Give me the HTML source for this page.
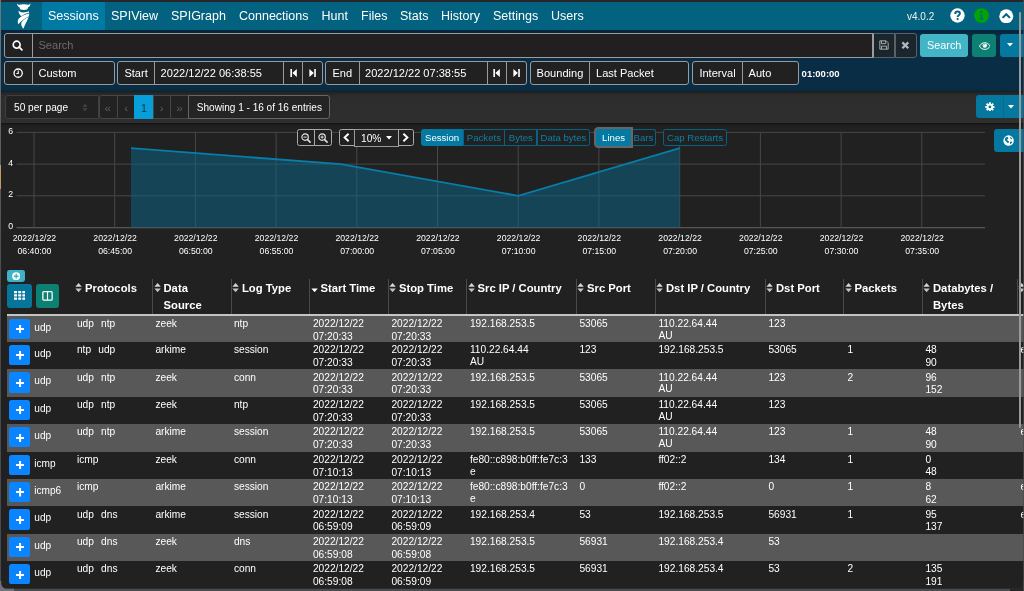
<!DOCTYPE html><html><head><meta charset="utf-8"><title>Arkime Sessions</title><style>*{box-sizing:border-box;margin:0;padding:0}
html,body{width:1024px;height:591px;overflow:hidden;background:#212121;font-family:"Liberation Sans",sans-serif;color:#fff}
body{position:relative}
.abs{position:absolute}
#topbar{position:absolute;left:0;top:0;width:1024px;height:2px;background:#26262b}
#nav{position:absolute;left:0;top:2px;width:1024px;height:27.6px;background:#03627f}
#nav .active{position:absolute;left:42px;top:0;width:63px;height:27.6px;background:#0079a3}
#nav span.i{position:absolute;top:7.3px;font-size:12.5px;line-height:15px;color:#fff;white-space:nowrap}
#navy{position:absolute;left:0;top:29.6px;width:1024px;height:61.6px;background:linear-gradient(#05253a 0,#082b41 4px,#092d44 6px,#092d44 100%)}
.box{position:absolute;background:#212121;border:0.8px solid #979a9e;height:23.6px}
.t{position:absolute;font-size:11.05px;line-height:13px;color:#fff;white-space:nowrap}
#pagebar{position:absolute;left:0;top:91.2px;width:1024px;height:31.5px;background:linear-gradient(#1a1d20 0,#272727 2.5px,#2d2d2d 5px,#2e2e2e 100%);box-shadow:0 1px 2.5px rgba(0,0,0,.55)}
.pbox{position:absolute;top:95.2px;height:24px;background:#222;border:0.8px solid #464646}
.row{position:absolute;left:7px;width:1017px}
.row.odd{background:#585858}
.row.even{background:#212121}
.plus{position:absolute;left:1.9px;top:3.1px;width:21.2px;height:20.2px;background:#0a84ff;border-radius:2.6px;display:flex;align-items:center;justify-content:center}
.proto0{position:absolute;left:27.3px;top:6px;font-size:10.1px;line-height:12px;color:#fff}
.c{position:absolute;top:2.3px;font-size:10.2px;line-height:12.75px;color:#fff;white-space:nowrap;margin-left:-7px}
.h{position:absolute;font-size:11.25px;line-height:16.8px;font-weight:bold;color:#fff;white-space:nowrap;top:279.9px}
.sep{position:absolute;top:279px;width:1px;height:35.5px;background:#4a4a4a}
.lbl{position:absolute;font-size:8.7px;line-height:13.2px;color:#fff;text-align:center;width:80px;white-space:nowrap}
.ylb{position:absolute;left:5px;width:8px;text-align:right;font-size:8.7px;line-height:10px;color:#fff}
.cb{position:absolute;top:129.2px;height:16.8px;font-size:9.6px;line-height:15.2px;white-space:nowrap;text-align:center}

.g{margin-left:7.2px}
#wrap{position:absolute;left:0;top:0;width:1024px;height:591px;will-change:transform}
.l2{position:relative}
</style></head><body><div id="wrap">
<div id="topbar"></div>
<div id="nav">
 <div class="active"></div>
 <svg class="abs" style="left:12px;top:-2px" width="28" height="32" viewBox="12 0 28 32">
  <path fill="#fff" d="M17.1 3.2C17.8 4.5 18.8 5 20 4.8C21.6 4 26 4 27.5 4.8C28.7 5 29.7 4.5 30.4 3.2C30.5 5.2 29.6 6.6 28.2 7.2C28 8.4 27.4 9.4 26.4 9.9C25.6 10.2 24.8 10 24 9.7C23.2 10 22.2 10.2 21.2 9.9C20.2 9.4 19.6 8.4 19.4 7.2C18 6.6 17 5.2 17.1 3.2Z"/>
  <path fill="#03627f" fill-opacity=".45" d="M20.6 8.9C21.4 8.5 22.4 8.8 23 9.5C22.2 10 21.2 9.8 20.6 8.9ZM27.2 8.9C26.4 8.5 25.4 8.8 24.8 9.5C25.6 10 26.6 9.8 27.2 8.9Z"/>
  <path fill="#fff" d="M18.5 10.6C19.5 12 21.5 12.6 23.5 12.5C25.5 12.4 27.5 12 28.9 11.3C29.1 11.8 29.1 12.3 29 12.8C26.5 13.4 23.5 14.6 21.2 16.2C19.6 15 18.5 13 18.5 10.6Z"/>
  <path fill="#fff" d="M29.2 13.4C29.3 14.6 29.1 15.6 28.7 16.4C25 18 21 21 18.3 24.2C17.4 22.4 17.6 20.2 18.8 18.6C21.4 15.8 25.4 14.2 29.2 13.4Z"/>
  <path fill="#fff" d="M28.6 17C27.6 21 24.8 24 23.5 28.8C21.4 26.6 20.7 24.2 21.6 22.2C23 20 26 18 28.6 17Z"/>
 </svg>
 <span class="i" style="left:48px">Sessions</span>
 <span class="i" style="left:111px">SPIView</span>
 <span class="i" style="left:171px">SPIGraph</span>
 <span class="i" style="left:239px">Connections</span>
 <span class="i" style="left:321.5px">Hunt</span>
 <span class="i" style="left:361px">Files</span>
 <span class="i" style="left:400px">Stats</span>
 <span class="i" style="left:441px">History</span>
 <span class="i" style="left:493px">Settings</span>
 <span class="i" style="left:551px">Users</span>
 <span class="abs" style="left:907px;top:8.9px;font-size:10px;line-height:12px;color:#f0f0f0">v4.0.2</span>
 <svg class="abs" style="left:949.8px;top:5.9px" width="15" height="15" viewBox="0 0 15 15"><circle cx="7.5" cy="7.5" r="7.2" fill="#fff"/><path d="M5.2 5.9C5.2 4.4 6.2 3.5 7.6 3.5C9 3.5 9.9 4.4 9.9 5.5C9.9 7.1 7.6 7.2 7.6 8.9" fill="none" stroke="#03627f" stroke-width="1.9"/><circle cx="7.6" cy="11.1" r="1.15" fill="#03627f"/></svg>
 <svg class="abs" style="left:974.4px;top:6.4px" width="15" height="15" viewBox="0 0 15 15"><circle cx="7.5" cy="7.5" r="7.3" fill="#00a600"/><circle cx="7.4" cy="3.9" r="1.25" fill="#03627f"/><path d="M5.8 6.3H8.5V10.4H9.4V11.8H5.7V10.4H6.5V7.6H5.8Z" fill="#03627f"/></svg>
 <svg class="abs" style="left:999px;top:6.8px" width="14.5" height="14.5" viewBox="0 0 15 15"><circle cx="7.5" cy="7.5" r="7.2" fill="#fff"/><path d="M3.7 9.2L7.5 5.4L11.3 9.2" fill="none" stroke="#03627f" stroke-width="2.1"/></svg>
</div>
<div id="navy"></div>

<!-- search row -->
<div class="box" style="left:4px;top:33px;height:25px;width:28.6px;border-radius:3px 0 0 3px"></div>
<svg class="abs" style="left:12px;top:40px" width="11.2" height="11.2" viewBox="0 0 12 12"><circle cx="5" cy="5" r="3.7" fill="none" stroke="#fff" stroke-width="1.8"/><path d="M7.5 7.5L10.6 10.6" stroke="#fff" stroke-width="1.9" stroke-linecap="round"/></svg>
<div class="box" style="left:31.8px;top:33px;height:25px;width:841.6px;background:#211f20;border-color:#9c9c9c"></div>
<span class="t" style="left:38.5px;top:39.2px;color:#6c6c6c">Search</span>
<div class="box" style="left:872.6px;top:33px;height:25px;width:22.8px;background:#1b252c;border-color:#5b6169;border-left-color:#9c9c9c"></div>
<svg class="abs" style="left:878.8px;top:40.4px" width="10" height="10" viewBox="0 0 12 12"><path d="M1 1H8.6L11 3.4V11H1Z M3 1V4.4H8V1 M3 11V7.4H9V11" fill="none" stroke="#aaa" stroke-width="1.2"/></svg>
<div class="box" style="left:894.6px;top:33px;height:25px;width:22.2px;border-radius:0 3px 3px 0;background:#1b252c;border-color:#5b6169"></div>
<svg class="abs" style="left:901.4px;top:41.4px" width="8.6" height="8.6" viewBox="0 0 9 9"><path d="M1.4 1.4L7.6 7.6M7.6 1.4L1.4 7.6" stroke="#b4b8bc" stroke-width="2.4"/></svg>
<div class="abs" style="left:920px;top:33.6px;width:48.4px;height:23.6px;border-radius:3px;background:#42b6c7"></div>
<span class="t" style="left:926.9px;top:39.2px;font-size:10.9px">Search</span>
<div class="abs" style="left:972.4px;top:33.6px;width:24px;height:23.6px;border-radius:3px;background:#0e8073"></div>
<svg class="abs" style="left:978.6px;top:41.6px" width="11.6" height="8" viewBox="0 0 12 8"><path d="M0.4 4.2C2 1.6 4 0.6 6 0.6C8 0.6 10 1.6 11.6 4.2C10 6.6 8 7.5 6 7.5C4 7.5 2 6.6 0.4 4.2Z" fill="none" stroke="#fff" stroke-width="1"/><circle cx="6" cy="3.6" r="2.3" fill="#fff"/><path d="M4.6 3.4C4.7 2.7 5.2 2.3 5.9 2.2" stroke="#0e8073" stroke-width=".7" fill="none"/></svg>
<div class="abs" style="left:1000px;top:33.6px;width:24px;height:23.6px;border-radius:3px 0 0 3px;background:#04789f"></div>
<svg class="abs" style="left:1006.6px;top:43.2px" width="6" height="4" viewBox="0 0 6 4"><path d="M0 0H6L3 3.6Z" fill="#fff"/></svg>

<!-- time row -->
<div class="box" style="left:4px;top:61.2px;width:28.6px;border-radius:3px 0 0 3px"></div>
<svg class="abs" style="left:13.3px;top:68.2px" width="10.3" height="10.3" viewBox="0 0 11 11"><circle cx="5.5" cy="5.5" r="4.4" fill="none" stroke="#fff" stroke-width="1.4"/><path d="M5.6 2.8V5.9H3.6" fill="none" stroke="#fff" stroke-width="1.2"/></svg>
<div class="box" style="left:31.8px;top:61.2px;width:83.2px;border-radius:0 3px 3px 0"></div>
<span class="t" style="left:38.5px;top:66.6px">Custom</span>

<div class="box" style="left:117.2px;top:61.2px;width:37.8px;border-radius:3px 0 0 3px"></div>
<span class="t" style="left:124.4px;top:66.6px">Start</span>
<div class="box" style="left:154.2px;top:61.2px;width:130px"></div>
<span class="t" style="left:160.6px;top:66.6px">2022/12/22 06:38:55</span>
<div class="box" style="left:283.4px;top:61.2px;width:19.6px"></div>
<div class="box" style="left:302.2px;top:61.2px;width:20.6px;border-radius:0 3px 3px 0"></div>
<svg class="abs" style="left:289.6px;top:68.2px" width="7.2" height="10" viewBox="0 0 8 10"><path d="M0.4 0.6H2.2V9.4H0.4Z M7.6 0.6V9.4L2.6 5Z" fill="#fff"/></svg>
<svg class="abs" style="left:308.9px;top:68.2px" width="7.2" height="10" viewBox="0 0 8 10"><path d="M7.6 0.6H5.8V9.4H7.6Z M0.4 0.6V9.4L5.4 5Z" fill="#fff"/></svg>

<div class="box" style="left:325.3px;top:61.2px;width:34.3px;border-radius:3px 0 0 3px"></div>
<span class="t" style="left:332.4px;top:66.6px">End</span>
<div class="box" style="left:358.8px;top:61.2px;width:129px"></div>
<span class="t" style="left:365px;top:66.6px">2022/12/22 07:38:55</span>
<div class="box" style="left:487px;top:61.2px;width:20px"></div>
<div class="box" style="left:506.2px;top:61.2px;width:20.6px;border-radius:0 3px 3px 0"></div>
<svg class="abs" style="left:493.4px;top:68.2px" width="7.2" height="10" viewBox="0 0 8 10"><path d="M0.4 0.6H2.2V9.4H0.4Z M7.6 0.6V9.4L2.6 5Z" fill="#fff"/></svg>
<svg class="abs" style="left:513.1px;top:68.2px" width="7.2" height="10" viewBox="0 0 8 10"><path d="M7.6 0.6H5.8V9.4H7.6Z M0.4 0.6V9.4L5.4 5Z" fill="#fff"/></svg>

<div class="box" style="left:530.4px;top:61.2px;width:59.8px;border-radius:3px 0 0 3px"></div>
<span class="t" style="left:536.6px;top:66.6px">Bounding</span>
<div class="box" style="left:589.4px;top:61.2px;width:100px;border-radius:0 3px 3px 0"></div>
<span class="t" style="left:596px;top:66.6px">Last Packet</span>

<div class="box" style="left:692.2px;top:61.2px;width:50.8px;border-radius:3px 0 0 3px"></div>
<span class="t" style="left:699.4px;top:66.6px">Interval</span>
<div class="box" style="left:742.2px;top:61.2px;width:56.6px;border-radius:0 3px 3px 0"></div>
<span class="t" style="left:748.6px;top:66.6px">Auto</span>
<span class="t" style="left:801.6px;top:67px;font-size:9.5px;font-weight:bold">01:00:00</span>

<!-- pagination bar -->
<div id="pagebar"></div>
<div class="pbox" style="left:4.6px;width:94px;border-radius:3px 0 0 3px;border-color:#3e3e3e"></div>
<span class="t" style="left:14px;top:101.2px;font-size:10.15px">50 per page</span>
<svg class="abs" style="left:82.4px;top:103.2px" width="6" height="9" viewBox="0 0 7 10"><path d="M3.5 0.5L6.5 4H0.5Z M3.5 9.5L6.5 6H0.5Z" fill="#41444a"/></svg>
<div class="pbox" style="left:98.6px;width:19.4px;border-radius:3px 0 0 3px"></div>
<div class="pbox" style="left:117.2px;width:18px"></div>
<div class="pbox" style="left:134.4px;width:19px;background:#069fd9;border-color:#069fd9"></div>
<div class="pbox" style="left:152.6px;width:18px"></div>
<div class="pbox" style="left:169.8px;width:19px"></div>
<span class="t" style="left:104.6px;top:100.8px;color:#5c5c5c;font-size:11.6px">«</span>
<span class="t" style="left:124.2px;top:100.8px;color:#5c5c5c;font-size:11.6px">‹</span>
<span class="t" style="left:141px;top:101.6px;color:#17303d;font-size:10.6px">1</span>
<span class="t" style="left:159.8px;top:100.8px;color:#5c5c5c;font-size:11.6px">›</span>
<span class="t" style="left:176.2px;top:100.8px;color:#5c5c5c;font-size:11.6px">»</span>
<div class="pbox" style="left:188px;width:142.4px;border-radius:0 3px 3px 0;border-color:#666;background:#242424"></div>
<span class="t" style="left:196.8px;top:101.2px;font-size:10.05px">Showing 1 - 16 of 16 entries</span>
<div class="abs" style="left:976.4px;top:94.9px;width:47.6px;height:23.6px;border-radius:3px 0 0 3px;background:#04789f"></div>
<div class="abs" style="left:1003px;top:94.9px;width:1px;height:23.6px;background:#066b8d"></div>
<svg class="abs" style="left:984.9px;top:101.6px" width="9.8" height="9.8" viewBox="0 0 11 11"><g fill="#fff"><circle cx="5.5" cy="5.5" r="3.6"/><g><rect x="4.4" y="0.3" width="2.2" height="10.4" rx="0.4"/><rect x="4.4" y="0.3" width="2.2" height="10.4" rx="0.4" transform="rotate(45 5.5 5.5)"/><rect x="4.4" y="0.3" width="2.2" height="10.4" rx="0.4" transform="rotate(90 5.5 5.5)"/><rect x="4.4" y="0.3" width="2.2" height="10.4" rx="0.4" transform="rotate(135 5.5 5.5)"/></g></g><circle cx="5.5" cy="5.5" r="1.6" fill="#04789f"/></svg>
<svg class="abs" style="left:1008.4px;top:104.6px" width="6" height="4" viewBox="0 0 6 4"><path d="M0 0H6L3 3.6Z" fill="#fff"/></svg>

<svg class="abs" style="left:0;top:125px" width="1024" height="140" viewBox="0 125 1024 140">
<rect x="16.5" y="131.9" width="968.5" height="1" fill="#484848"/>
<rect x="16.5" y="163.6" width="968.5" height="1" fill="#484848"/>
<rect x="16.5" y="195.3" width="968.5" height="1" fill="#484848"/>
<rect x="16.5" y="227.0" width="968.5" height="1.3" fill="#555"/>
<rect x="33.5" y="132.4" width="1" height="95.1" fill="#484848"/>
<rect x="114.2" y="132.4" width="1" height="95.1" fill="#484848"/>
<rect x="194.9" y="132.4" width="1" height="95.1" fill="#484848"/>
<rect x="275.6" y="132.4" width="1" height="95.1" fill="#484848"/>
<rect x="356.3" y="132.4" width="1" height="95.1" fill="#484848"/>
<rect x="437.0" y="132.4" width="1" height="95.1" fill="#484848"/>
<rect x="517.7" y="132.4" width="1" height="95.1" fill="#484848"/>
<rect x="598.4" y="132.4" width="1" height="95.1" fill="#484848"/>
<rect x="679.2" y="132.4" width="1" height="95.1" fill="#484848"/>
<rect x="759.9" y="132.4" width="1" height="95.1" fill="#484848"/>
<rect x="840.6" y="132.4" width="1" height="95.1" fill="#484848"/>
<rect x="921.3" y="132.4" width="1" height="95.1" fill="#484848"/>
<polygon points="131.0,227.5 131.0,148.2 340.7,164.1 518.2,195.8 679.7,148.2 679.7,227.5" fill="#07688c" fill-opacity="0.5"/>
<polyline points="131.0,148.2 340.7,164.1 518.2,195.8 679.7,148.2" fill="none" stroke="#087da7" stroke-width="1.8"/>
</svg>
<div class="ylb" style="top:125.9px">6</div>
<div class="ylb" style="top:157.6px">4</div>
<div class="ylb" style="top:189.3px">2</div>
<div class="ylb" style="top:221.0px">0</div>
<div class="lbl" style="left:-5.6px;top:231.8px">2022/12/22<br>06:40:00</div>
<div class="lbl" style="left:75.1px;top:231.8px">2022/12/22<br>06:45:00</div>
<div class="lbl" style="left:155.8px;top:231.8px">2022/12/22<br>06:50:00</div>
<div class="lbl" style="left:236.5px;top:231.8px">2022/12/22<br>06:55:00</div>
<div class="lbl" style="left:317.2px;top:231.8px">2022/12/22<br>07:00:00</div>
<div class="lbl" style="left:397.9px;top:231.8px">2022/12/22<br>07:05:00</div>
<div class="lbl" style="left:478.6px;top:231.8px">2022/12/22<br>07:10:00</div>
<div class="lbl" style="left:559.3px;top:231.8px">2022/12/22<br>07:15:00</div>
<div class="lbl" style="left:640.1px;top:231.8px">2022/12/22<br>07:20:00</div>
<div class="lbl" style="left:720.8px;top:231.8px">2022/12/22<br>07:25:00</div>
<div class="lbl" style="left:801.5px;top:231.8px">2022/12/22<br>07:30:00</div>
<div class="lbl" style="left:882.2px;top:231.8px">2022/12/22<br>07:35:00</div>
<!-- chart controls -->
<div class="cb" style="left:297.4px;width:17.6px;border:0.8px solid #aaa;border-radius:2.4px 0 0 2.4px;background:#212121"></div>
<div class="cb" style="left:314.2px;width:17.8px;border:0.8px solid #aaa;border-radius:0 2.4px 2.4px 0;background:#212121"></div>
<svg class="abs" style="left:301px;top:133.2px" width="10" height="10" viewBox="0 0 10 10"><circle cx="4.1" cy="4.1" r="3.2" fill="none" stroke="#e6e6e6" stroke-width="1.15"/><path d="M6.6 6.6L9.1 9.1" stroke="#e6e6e6" stroke-width="1.5" stroke-linecap="round"/><path d="M2.5 4.1H5.7" stroke="#e6e6e6" stroke-width="0.95"/></svg>
<svg class="abs" style="left:318.2px;top:133.2px" width="10" height="10" viewBox="0 0 10 10"><circle cx="4.1" cy="4.1" r="3.2" fill="none" stroke="#e6e6e6" stroke-width="1.15"/><path d="M6.6 6.6L9.1 9.1" stroke="#e6e6e6" stroke-width="1.5" stroke-linecap="round"/><path d="M2.5 4.1H5.7M4.1 2.5V5.7" stroke="#e6e6e6" stroke-width="0.95"/></svg>
<div class="cb" style="left:338.8px;width:16.2px;border:0.8px solid #aaa;border-radius:2.4px 0 0 2.4px;background:#212121"></div>
<div class="cb" style="left:354.2px;width:44.6px;border:0.8px solid #999;background:#232323;top:129px;height:17.8px"></div>
<div class="cb" style="left:398px;width:15.6px;border:0.8px solid #aaa;border-radius:0 2.4px 2.4px 0;background:#212121"></div>
<svg class="abs" style="left:343.4px;top:133.4px" width="7" height="9" viewBox="0 0 7 9"><path d="M5.6 0.8L1.6 4.5L5.6 8.2" fill="none" stroke="#fff" stroke-width="1.9"/></svg>
<svg class="abs" style="left:402.4px;top:133.4px" width="7" height="9" viewBox="0 0 7 9"><path d="M1.4 0.8L5.4 4.5L1.4 8.2" fill="none" stroke="#fff" stroke-width="1.9"/></svg>
<span class="t" style="left:361px;top:131.6px;font-size:10.2px">10%</span>
<svg class="abs" style="left:386px;top:136.4px" width="6" height="4" viewBox="0 0 6 4"><path d="M0 0H6L3 3.4Z" fill="#fff"/></svg>

<div class="cb" style="left:420.8px;width:42.6px;background:#0479a1;border:0.8px solid #0479a1;border-radius:2.4px 0 0 2.4px;color:#fff">Session</div>
<div class="cb" style="left:462.8px;width:42.2px;border:0.8px solid #066384;color:#0a80aa;background:#212121">Packets</div>
<div class="cb" style="left:504.2px;width:33.2px;border:0.8px solid #066384;color:#0a80aa;background:#212121">Bytes</div>
<div class="cb" style="left:536.6px;width:53.6px;border:0.8px solid #066384;color:#0a80aa;background:#212121;border-radius:0 2.4px 2.4px 0">Data bytes</div>
<div class="cb" style="left:596.4px;width:34.4px;background:#0479a1;border:0.8px solid #0479a1;border-radius:2.4px 0 0 2.4px;color:#fff;box-shadow:0 0 0 2px #666;z-index:3">Lines</div>
<div class="cb" style="left:631.4px;width:25px;border:0.8px solid #066384;border-left:none;color:#0a80aa;background:#212121;border-radius:0 2.4px 2.4px 0">Bars</div>
<div class="cb" style="left:663px;width:64.2px;border:0.8px solid #066384;color:#0a80aa;background:#212121;border-radius:2.4px">Cap Restarts</div>

<div class="abs" style="left:994.4px;top:129px;width:29.6px;height:22.8px;background:#04789f;border-radius:3px 0 0 3px"></div>
<svg class="abs" style="left:1003px;top:134.6px" width="11.2" height="11.2" viewBox="0 0 12 12"><circle cx="6" cy="6" r="5.6" fill="#fff"/><path d="M2.2 3.4C3.2 2.2 4.4 2 5.4 2.6C6.2 3.2 5.6 4.2 4.8 4.6C4.2 5.2 4.6 6 5.4 6.2C6.4 6.6 6.6 7.6 6 8.4C5.4 9 4.4 8.6 4 7.8C3.6 6.8 2.6 6.6 2.2 5.6Z M7.4 2.2C8.6 2.4 9.6 3.2 10 4.4C9.2 4.8 8.2 4.4 7.8 3.6Z M8 7C8.8 6.6 9.8 7 10 7.6C9.6 8.6 8.8 9.4 7.8 9.8C7.4 8.8 7.4 7.6 8 7Z" fill="#04789f"/></svg>

<div class="abs" style="left:7.2px;top:270px;width:17.4px;height:12px;border-radius:2.4px;background:#3fb2c5"></div>
<svg class="abs" style="left:11.7px;top:271.8px" width="8.4" height="8.4" viewBox="0 0 10 10"><circle cx="5" cy="5" r="4.8" fill="#fff"/><path d="M5 2.2V7.8M2.2 5H7.8" stroke="#3fb2c5" stroke-width="1.7"/></svg>
<div class="abs" style="left:7.2px;top:284.2px;width:24.6px;height:24.2px;border-radius:3px;background:#07759a"></div>
<svg class="abs" style="left:14px;top:291.2px" width="11.4" height="8.8" viewBox="0 0 12 11" preserveAspectRatio="none"><g fill="#fff"><rect x="0" y="0" width="3.2" height="2.8" rx=".4"/><rect x="4.4" y="0" width="3.2" height="2.8" rx=".4"/><rect x="8.8" y="0" width="3.2" height="2.8" rx=".4"/><rect x="0" y="4.1" width="3.2" height="2.8" rx=".4"/><rect x="4.4" y="4.1" width="3.2" height="2.8" rx=".4"/><rect x="8.8" y="4.1" width="3.2" height="2.8" rx=".4"/><rect x="0" y="8.2" width="3.2" height="2.8" rx=".4"/><rect x="4.4" y="8.2" width="3.2" height="2.8" rx=".4"/><rect x="8.8" y="8.2" width="3.2" height="2.8" rx=".4"/></g></svg>
<div class="abs" style="left:35.8px;top:284.2px;width:23.4px;height:24.2px;border-radius:3px;background:#0c8072"></div>
<svg class="abs" style="left:42px;top:291.2px" width="11" height="9.8" viewBox="0 0 12 11"><rect x="0.8" y="0.8" width="10.4" height="9.4" rx="1" fill="none" stroke="#fff" stroke-width="1.4"/><path d="M6 1V10" stroke="#fff" stroke-width="1.3"/></svg>
<svg class="abs" style="left:75.0px;top:282.9px" width="7.2" height="9.2" viewBox="0 0 7 10"><path d="M3.5 0L7 4.1H0Z" fill="#d6d6d6"/><path d="M3.5 10L7 5.9H0Z" fill="#c4c4c4"/></svg>
<div class="h" style="left:85.0px">Protocols</div>
<div class="sep" style="left:152.0px"></div>
<svg class="abs" style="left:153.5px;top:282.9px" width="7.2" height="9.2" viewBox="0 0 7 10"><path d="M3.5 0L7 4.1H0Z" fill="#d6d6d6"/><path d="M3.5 10L7 5.9H0Z" fill="#c4c4c4"/></svg>
<div class="h" style="left:163.5px">Data<br>Source</div>
<div class="sep" style="left:230.5px"></div>
<svg class="abs" style="left:232.0px;top:282.9px" width="7.2" height="9.2" viewBox="0 0 7 10"><path d="M3.5 0L7 4.1H0Z" fill="#d6d6d6"/><path d="M3.5 10L7 5.9H0Z" fill="#c4c4c4"/></svg>
<div class="h" style="left:242.0px">Log Type</div>
<div class="sep" style="left:309.0px"></div>
<svg class="abs" style="left:310.5px;top:282.9px" width="7.2" height="9.2" viewBox="0 0 7 10"><path d="M3.5 10L7 5.9H0Z" fill="#fff"/></svg>
<div class="h" style="left:320.5px">Start Time</div>
<div class="sep" style="left:387.5px"></div>
<svg class="abs" style="left:389.0px;top:282.9px" width="7.2" height="9.2" viewBox="0 0 7 10"><path d="M3.5 0L7 4.1H0Z" fill="#d6d6d6"/><path d="M3.5 10L7 5.9H0Z" fill="#c4c4c4"/></svg>
<div class="h" style="left:399.0px">Stop Time</div>
<div class="sep" style="left:466.0px"></div>
<svg class="abs" style="left:467.5px;top:282.9px" width="7.2" height="9.2" viewBox="0 0 7 10"><path d="M3.5 0L7 4.1H0Z" fill="#d6d6d6"/><path d="M3.5 10L7 5.9H0Z" fill="#c4c4c4"/></svg>
<div class="h" style="left:477.5px">Src IP / Country</div>
<div class="sep" style="left:575.5px"></div>
<svg class="abs" style="left:577.0px;top:282.9px" width="7.2" height="9.2" viewBox="0 0 7 10"><path d="M3.5 0L7 4.1H0Z" fill="#d6d6d6"/><path d="M3.5 10L7 5.9H0Z" fill="#c4c4c4"/></svg>
<div class="h" style="left:587.0px">Src Port</div>
<div class="sep" style="left:654.5px"></div>
<svg class="abs" style="left:656.0px;top:282.9px" width="7.2" height="9.2" viewBox="0 0 7 10"><path d="M3.5 0L7 4.1H0Z" fill="#d6d6d6"/><path d="M3.5 10L7 5.9H0Z" fill="#c4c4c4"/></svg>
<div class="h" style="left:666.0px">Dst IP / Country</div>
<div class="sep" style="left:764.5px"></div>
<svg class="abs" style="left:766.0px;top:282.9px" width="7.2" height="9.2" viewBox="0 0 7 10"><path d="M3.5 0L7 4.1H0Z" fill="#d6d6d6"/><path d="M3.5 10L7 5.9H0Z" fill="#c4c4c4"/></svg>
<div class="h" style="left:776.0px">Dst Port</div>
<div class="sep" style="left:843.0px"></div>
<svg class="abs" style="left:844.5px;top:282.9px" width="7.2" height="9.2" viewBox="0 0 7 10"><path d="M3.5 0L7 4.1H0Z" fill="#d6d6d6"/><path d="M3.5 10L7 5.9H0Z" fill="#c4c4c4"/></svg>
<div class="h" style="left:854.5px">Packets</div>
<div class="sep" style="left:921.5px"></div>
<svg class="abs" style="left:923.0px;top:282.9px" width="7.2" height="9.2" viewBox="0 0 7 10"><path d="M3.5 0L7 4.1H0Z" fill="#d6d6d6"/><path d="M3.5 10L7 5.9H0Z" fill="#c4c4c4"/></svg>
<div class="h" style="left:933.0px">Databytes /<br>Bytes</div>
<div class="sep" style="left:1016.5px"></div>
<svg class="abs" style="left:1018.0px;top:282.9px" width="7.2" height="9.2" viewBox="0 0 7 10"><path d="M3.5 0L7 4.1H0Z" fill="#d6d6d6"/><path d="M3.5 10L7 5.9H0Z" fill="#c4c4c4"/></svg>
<div class="abs" style="left:7px;top:313.8px;width:1017px;height:1.8px;background:#c4c4c4"></div>
<div class="row odd" style="top:315.50px;height:26.80px">
<div class="plus"><svg width="8.2" height="8.2" viewBox="0 0 10 10" style="margin-top:0.6px;margin-left:0.4px"><path d="M5 0.6V9.4M0.6 5H9.4" stroke="#fff" stroke-width="2.4" stroke-linecap="round"/></svg></div>
<div class="proto0">udp</div>
<div class="c" style="left:76.9px">udp<span class=g></span>ntp</div>
<div class="c" style="left:155.4px">zeek</div>
<div class="c" style="left:233.9px">ntp</div>
<div class="c" style="left:312.9px">2022/12/22<br><span class="l2" style="top:0px">07:20:33</span></div>
<div class="c" style="left:391.4px">2022/12/22<br><span class="l2" style="top:0px">07:20:33</span></div>
<div class="c" style="left:469.9px">192.168.253.5</div>
<div class="c" style="left:579.4px">53065</div>
<div class="c" style="left:658.4px">110.22.64.44<br><span class="l2" style="top:-1px">AU</span></div>
<div class="c" style="left:768.4px">123</div>
<div class="c" style="left:846.9px"><span style="padding-left:0.6px"></span></div>
<div class="c" style="left:925.4px"></div>
</div>
<div class="row even" style="top:342.00px;height:27.70px">
<div class="plus"><svg width="8.2" height="8.2" viewBox="0 0 10 10" style="margin-top:0.6px;margin-left:0.4px"><path d="M5 0.6V9.4M0.6 5H9.4" stroke="#fff" stroke-width="2.4" stroke-linecap="round"/></svg></div>
<div class="proto0">udp</div>
<div class="c" style="left:76.9px">ntp<span class=g></span>udp</div>
<div class="c" style="left:155.4px">arkime</div>
<div class="c" style="left:233.9px">session</div>
<div class="c" style="left:312.9px">2022/12/22<br><span class="l2" style="top:0px">07:20:33</span></div>
<div class="c" style="left:391.4px">2022/12/22<br><span class="l2" style="top:0px">07:20:33</span></div>
<div class="c" style="left:469.9px">110.22.64.44<br><span class="l2" style="top:-1px">AU</span></div>
<div class="c" style="left:579.4px">123</div>
<div class="c" style="left:658.4px">192.168.253.5</div>
<div class="c" style="left:768.4px">53065</div>
<div class="c" style="left:846.9px"><span style="padding-left:0.6px">1</span></div>
<div class="c" style="left:925.4px">48<br><span class="l2" style="top:-0.5px">90</span></div>
<div class="c" style="left:1020.4px">e</div>
</div>
<div class="row odd" style="top:369.40px;height:27.70px">
<div class="plus"><svg width="8.2" height="8.2" viewBox="0 0 10 10" style="margin-top:0.6px;margin-left:0.4px"><path d="M5 0.6V9.4M0.6 5H9.4" stroke="#fff" stroke-width="2.4" stroke-linecap="round"/></svg></div>
<div class="proto0">udp</div>
<div class="c" style="left:76.9px">udp<span class=g></span>ntp</div>
<div class="c" style="left:155.4px">zeek</div>
<div class="c" style="left:233.9px">conn</div>
<div class="c" style="left:312.9px">2022/12/22<br><span class="l2" style="top:0px">07:20:33</span></div>
<div class="c" style="left:391.4px">2022/12/22<br><span class="l2" style="top:0px">07:20:33</span></div>
<div class="c" style="left:469.9px">192.168.253.5</div>
<div class="c" style="left:579.4px">53065</div>
<div class="c" style="left:658.4px">110.22.64.44<br><span class="l2" style="top:-1px">AU</span></div>
<div class="c" style="left:768.4px">123</div>
<div class="c" style="left:846.9px"><span style="padding-left:0.6px">2</span></div>
<div class="c" style="left:925.4px">96<br><span class="l2" style="top:-0.5px">152</span></div>
</div>
<div class="row even" style="top:396.80px;height:27.70px">
<div class="plus"><svg width="8.2" height="8.2" viewBox="0 0 10 10" style="margin-top:0.6px;margin-left:0.4px"><path d="M5 0.6V9.4M0.6 5H9.4" stroke="#fff" stroke-width="2.4" stroke-linecap="round"/></svg></div>
<div class="proto0">udp</div>
<div class="c" style="left:76.9px">udp<span class=g></span>ntp</div>
<div class="c" style="left:155.4px">zeek</div>
<div class="c" style="left:233.9px">ntp</div>
<div class="c" style="left:312.9px">2022/12/22<br><span class="l2" style="top:0px">07:20:33</span></div>
<div class="c" style="left:391.4px">2022/12/22<br><span class="l2" style="top:0px">07:20:33</span></div>
<div class="c" style="left:469.9px">192.168.253.5</div>
<div class="c" style="left:579.4px">53065</div>
<div class="c" style="left:658.4px">110.22.64.44<br><span class="l2" style="top:-1px">AU</span></div>
<div class="c" style="left:768.4px">123</div>
<div class="c" style="left:846.9px"><span style="padding-left:0.6px"></span></div>
<div class="c" style="left:925.4px"></div>
</div>
<div class="row odd" style="top:424.20px;height:27.70px">
<div class="plus"><svg width="8.2" height="8.2" viewBox="0 0 10 10" style="margin-top:0.6px;margin-left:0.4px"><path d="M5 0.6V9.4M0.6 5H9.4" stroke="#fff" stroke-width="2.4" stroke-linecap="round"/></svg></div>
<div class="proto0">udp</div>
<div class="c" style="left:76.9px">udp<span class=g></span>ntp</div>
<div class="c" style="left:155.4px">arkime</div>
<div class="c" style="left:233.9px">session</div>
<div class="c" style="left:312.9px">2022/12/22<br><span class="l2" style="top:0px">07:20:33</span></div>
<div class="c" style="left:391.4px">2022/12/22<br><span class="l2" style="top:0px">07:20:33</span></div>
<div class="c" style="left:469.9px">192.168.253.5</div>
<div class="c" style="left:579.4px">53065</div>
<div class="c" style="left:658.4px">110.22.64.44<br><span class="l2" style="top:-1px">AU</span></div>
<div class="c" style="left:768.4px">123</div>
<div class="c" style="left:846.9px"><span style="padding-left:0.6px">1</span></div>
<div class="c" style="left:925.4px">48<br><span class="l2" style="top:-0.5px">90</span></div>
<div class="c" style="left:1020.4px">e</div>
</div>
<div class="row even" style="top:451.60px;height:27.70px">
<div class="plus"><svg width="8.2" height="8.2" viewBox="0 0 10 10" style="margin-top:0.6px;margin-left:0.4px"><path d="M5 0.6V9.4M0.6 5H9.4" stroke="#fff" stroke-width="2.4" stroke-linecap="round"/></svg></div>
<div class="proto0">icmp</div>
<div class="c" style="left:76.9px">icmp</div>
<div class="c" style="left:155.4px">zeek</div>
<div class="c" style="left:233.9px">conn</div>
<div class="c" style="left:312.9px">2022/12/22<br><span class="l2" style="top:0px">07:10:13</span></div>
<div class="c" style="left:391.4px">2022/12/22<br><span class="l2" style="top:0px">07:10:13</span></div>
<div class="c" style="left:469.9px">fe80::c898:b0ff:fe7c:3<br><span class="l2" style="top:-1px">e</span></div>
<div class="c" style="left:579.4px">133</div>
<div class="c" style="left:658.4px">ff02::2</div>
<div class="c" style="left:768.4px">134</div>
<div class="c" style="left:846.9px"><span style="padding-left:0.6px">1</span></div>
<div class="c" style="left:925.4px">0<br><span class="l2" style="top:-0.5px">48</span></div>
</div>
<div class="row odd" style="top:479.00px;height:27.70px">
<div class="plus"><svg width="8.2" height="8.2" viewBox="0 0 10 10" style="margin-top:0.6px;margin-left:0.4px"><path d="M5 0.6V9.4M0.6 5H9.4" stroke="#fff" stroke-width="2.4" stroke-linecap="round"/></svg></div>
<div class="proto0">icmp6</div>
<div class="c" style="left:76.9px">icmp</div>
<div class="c" style="left:155.4px">arkime</div>
<div class="c" style="left:233.9px">session</div>
<div class="c" style="left:312.9px">2022/12/22<br><span class="l2" style="top:0px">07:10:13</span></div>
<div class="c" style="left:391.4px">2022/12/22<br><span class="l2" style="top:0px">07:10:13</span></div>
<div class="c" style="left:469.9px">fe80::c898:b0ff:fe7c:3<br><span class="l2" style="top:-1px">e</span></div>
<div class="c" style="left:579.4px">0</div>
<div class="c" style="left:658.4px">ff02::2</div>
<div class="c" style="left:768.4px">0</div>
<div class="c" style="left:846.9px"><span style="padding-left:0.6px">1</span></div>
<div class="c" style="left:925.4px">8<br><span class="l2" style="top:-0.5px">62</span></div>
<div class="c" style="left:1020.4px">e</div>
</div>
<div class="row even" style="top:506.40px;height:27.70px">
<div class="plus"><svg width="8.2" height="8.2" viewBox="0 0 10 10" style="margin-top:0.6px;margin-left:0.4px"><path d="M5 0.6V9.4M0.6 5H9.4" stroke="#fff" stroke-width="2.4" stroke-linecap="round"/></svg></div>
<div class="proto0">udp</div>
<div class="c" style="left:76.9px">udp<span class=g></span>dns</div>
<div class="c" style="left:155.4px">arkime</div>
<div class="c" style="left:233.9px">session</div>
<div class="c" style="left:312.9px">2022/12/22<br><span class="l2" style="top:0px">06:59:09</span></div>
<div class="c" style="left:391.4px">2022/12/22<br><span class="l2" style="top:0px">06:59:09</span></div>
<div class="c" style="left:469.9px">192.168.253.4</div>
<div class="c" style="left:579.4px">53</div>
<div class="c" style="left:658.4px">192.168.253.5</div>
<div class="c" style="left:768.4px">56931</div>
<div class="c" style="left:846.9px"><span style="padding-left:0.6px">1</span></div>
<div class="c" style="left:925.4px">95<br><span class="l2" style="top:-0.5px">137</span></div>
<div class="c" style="left:1020.4px">e</div>
</div>
<div class="row odd" style="top:533.80px;height:27.70px">
<div class="plus"><svg width="8.2" height="8.2" viewBox="0 0 10 10" style="margin-top:0.6px;margin-left:0.4px"><path d="M5 0.6V9.4M0.6 5H9.4" stroke="#fff" stroke-width="2.4" stroke-linecap="round"/></svg></div>
<div class="proto0">udp</div>
<div class="c" style="left:76.9px">udp<span class=g></span>dns</div>
<div class="c" style="left:155.4px">zeek</div>
<div class="c" style="left:233.9px">dns</div>
<div class="c" style="left:312.9px">2022/12/22<br><span class="l2" style="top:0px">06:59:08</span></div>
<div class="c" style="left:391.4px">2022/12/22<br><span class="l2" style="top:0px">06:59:08</span></div>
<div class="c" style="left:469.9px">192.168.253.5</div>
<div class="c" style="left:579.4px">56931</div>
<div class="c" style="left:658.4px">192.168.253.4</div>
<div class="c" style="left:768.4px">53</div>
<div class="c" style="left:846.9px"><span style="padding-left:0.6px"></span></div>
<div class="c" style="left:925.4px"></div>
</div>
<div class="row even" style="top:561.20px;height:27.70px">
<div class="plus"><svg width="8.2" height="8.2" viewBox="0 0 10 10" style="margin-top:0.6px;margin-left:0.4px"><path d="M5 0.6V9.4M0.6 5H9.4" stroke="#fff" stroke-width="2.4" stroke-linecap="round"/></svg></div>
<div class="proto0">udp</div>
<div class="c" style="left:76.9px">udp<span class=g></span>dns</div>
<div class="c" style="left:155.4px">zeek</div>
<div class="c" style="left:233.9px">conn</div>
<div class="c" style="left:312.9px">2022/12/22<br><span class="l2" style="top:0px">06:59:08</span></div>
<div class="c" style="left:391.4px">2022/12/22<br><span class="l2" style="top:0px">06:59:09</span></div>
<div class="c" style="left:469.9px">192.168.253.5</div>
<div class="c" style="left:579.4px">56931</div>
<div class="c" style="left:658.4px">192.168.253.4</div>
<div class="c" style="left:768.4px">53</div>
<div class="c" style="left:846.9px"><span style="padding-left:0.6px">2</span></div>
<div class="c" style="left:925.4px">135<br><span class="l2" style="top:-0.5px">191</span></div>
</div>
<!-- window chrome overlays -->
<div class="abs" style="left:1019.2px;top:11.6px;width:1.9px;height:416.4px;background:#9a9a9a;border-radius:1px"></div>
<div class="abs" style="left:0;top:0;width:1.1px;height:591px;background:linear-gradient(#70767c 0,#5c636a 120px,#454b52 300px,#454b52 100%)"></div>
<div class="abs" style="left:0;top:165px;width:1.2px;height:24px;background:#c39a62"></div>
<div class="abs" style="left:1023.2px;top:0;width:0.8px;height:591px;background:rgba(70,76,84,.75)"></div>
<svg class="abs" style="left:0;top:581px" width="1024" height="10" viewBox="0 0 1024 10"><path d="M0 0V10H1024V0H1023.2V2.4C1023.2 5.6 1021 7.8 1017.6 7.8H7.2C3.8 7.8 1.2 5.4 1.2 2.4V0Z" fill="#4a4d50"/><path d="M1018 7.8C1021 7.8 1023.2 5.6 1023.2 2.4V10H1010V7.8Z" fill="#232527"/><path d="M0 4V10H14V7.8H7.2C3.8 7.8 1.2 5.4 1.2 2.4V0H0Z" fill="#6e7276"/></svg>

</div></body></html>
